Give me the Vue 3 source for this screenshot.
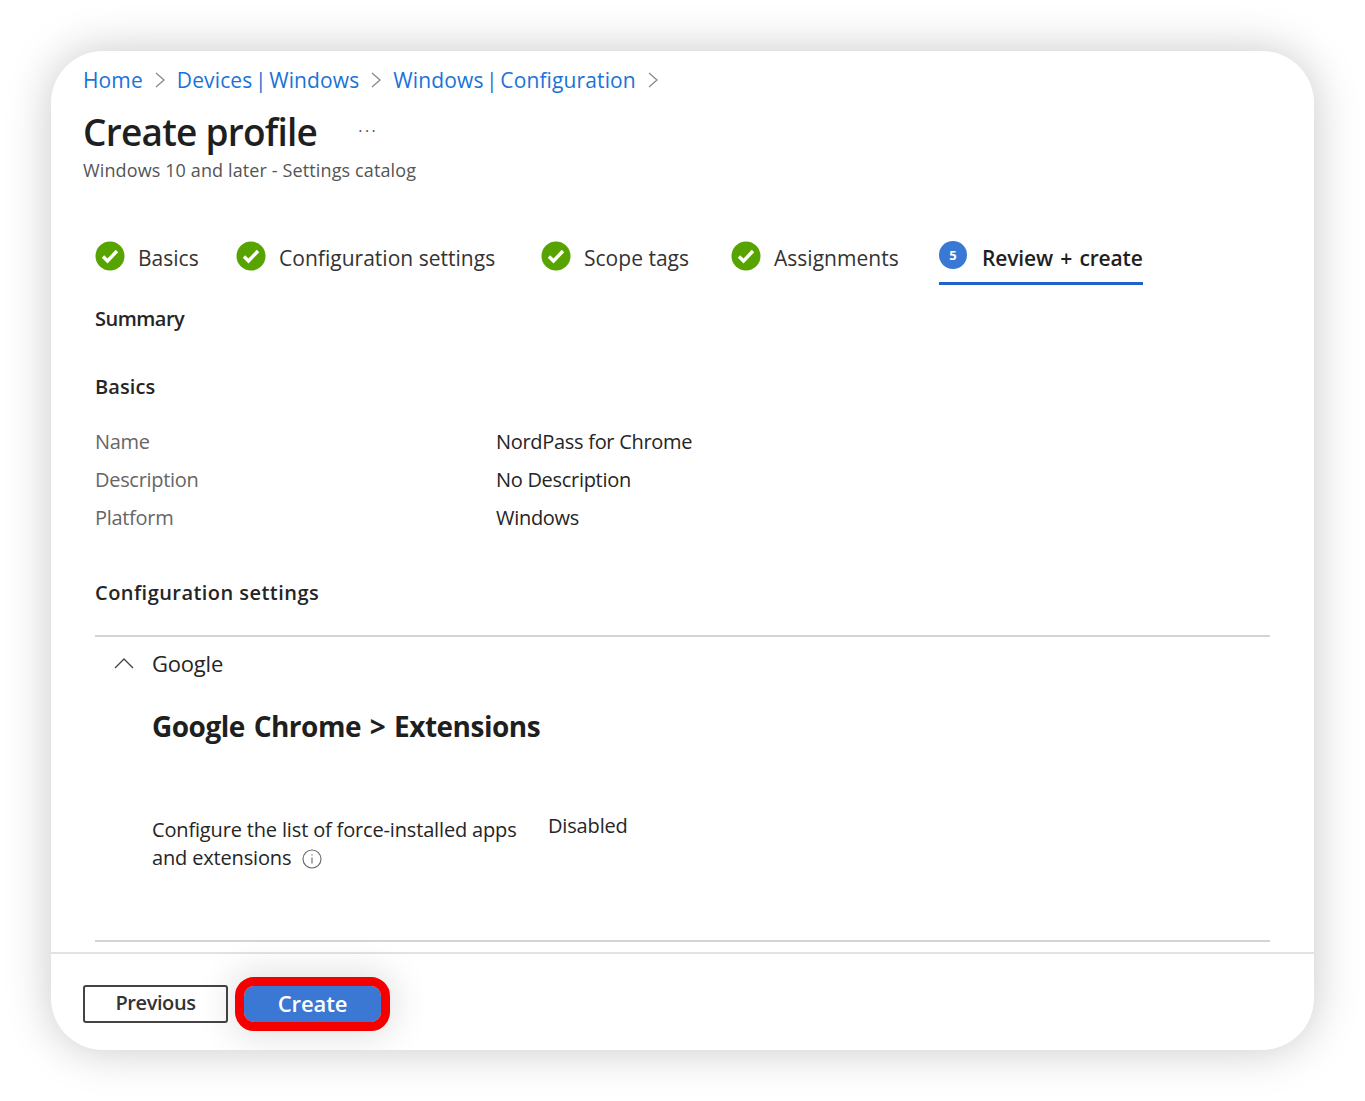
<script setup>
const crumbs = ['Home', 'Devices | Windows', 'Windows | Configuration']
const steps = ['Basics', 'Configuration settings', 'Scope tags', 'Assignments']
const basics = [
  { label: 'Name', value: 'NordPass for Chrome' },
  { label: 'Description', value: 'No Description' },
  { label: 'Platform', value: 'Windows' }
]
</script>

<template>
  <div class="page">
    <div class="card">
      <div class="content">
        <nav class="crumbs">
          <template v-for="c in crumbs" :key="c">
            <a class="crumb">{{ c }}</a>
            <svg class="chev" viewBox="0 0 12 18" fill="none" stroke="#8a8a8a" stroke-width="1.3">
              <path d="M2 2l8 7-8 7" />
            </svg>
          </template>
        </nav>
        <div class="title-row">
          <h1 class="title">Create profile</h1>
          <span class="more">···</span>
        </div>
        <p class="subtitle">Windows 10 and later - Settings catalog</p>

        <div class="body">
          <div class="tabs">
            <div v-for="s in steps" :key="s" class="tab">
              <svg class="tab-icon" viewBox="0 0 30 30">
                <circle cx="15" cy="15" r="14.5" fill="#57a300" />
                <path d="M8 15.5l4.5 4.5 9.5-10" fill="none" stroke="#fff" stroke-width="3.4" />
              </svg>
              <span>{{ s }}</span>
            </div>
            <div class="tab active">
              <span class="num">5</span>
              <span>Review + create</span>
            </div>
          </div>

          <h3 class="summary">Summary</h3>
          <h3 class="section">Basics</h3>
          <div v-for="b in basics" :key="b.label" class="row">
            <span class="row-label">{{ b.label }}</span>
            <span class="row-value">{{ b.value }}</span>
          </div>

          <h3 class="section config">Configuration settings</h3>
          <div class="accordion">
            <div class="acc-head">
              <svg class="acc-chev" viewBox="0 0 20 12" fill="none" stroke="#444" stroke-width="1.4">
                <path d="M1 11l9-9 9 9" />
              </svg>
              <span>Google</span>
            </div>
            <h2 class="acc-title">Google Chrome &gt; Extensions</h2>
            <div class="setting">
              <div class="setting-name">
                Configure the list of force-installed apps<br />
                and extensions
                <svg class="info" viewBox="0 0 20 20" fill="none" stroke="#666" stroke-width="1.1">
                  <circle cx="10" cy="10" r="9" />
                  <path d="M10 8.5v6M10 5.2v1.4" />
                </svg>
              </div>
              <div class="setting-value">Disabled</div>
            </div>
          </div>
        </div>
      </div>

      <footer class="footer">
        <button class="btn-prev">Previous</button>
        <button class="btn-create">Create</button>
      </footer>
    </div>
  </div>
</template>

<style>
html, body {
  margin: 0;
  background: #fff;
}
</style>

<style scoped>
.page {
  padding: 51px;
  height: 1101px;
  box-sizing: border-box;
  font-family: "Open Sans", "Noto Sans", sans-serif;
  color: #252525;
}

.card {
  height: 999px;
  background: #fff;
  border-radius: 52px;
  box-shadow: 0 0 46px rgba(0, 0, 0, 0.22);
  display: flex;
  flex-direction: column;
  overflow: hidden;
}

.content {
  flex: 1;
  padding: 14px 32px 0;
}

.crumbs {
  display: flex;
  align-items: center;
  height: 29px;
  font-size: 21px;
  letter-spacing: 0.12px;
  word-spacing: -3px;
}

.crumb {
  color: #1a73d8;
}

.chev {
  width: 12px;
  height: 18px;
  margin: 0 11px;
}

.title-row {
  display: flex;
  align-items: center;
  margin-top: 14px;
  height: 46px;
}

.title {
  margin: 0;
  font-size: 37px;
  font-weight: 600;
  letter-spacing: -0.75px;
  color: #1f1f1f;
}

.more {
  margin-left: 41px;
  font-size: 16px;
  letter-spacing: 2.5px;
  color: #555;
}

.subtitle {
  margin: 4px 0 0;
  font-size: 18px;
  letter-spacing: 0.12px;
  color: #555;
}

.body {
  padding: 0 12px;
}

.tabs {
  display: grid;
  grid-template-columns: 141px 305px 190px 208px auto;
  justify-content: start;
  margin-top: 49px;
  height: 74px;
  font-size: 21px;
  letter-spacing: 0.02px;
}

.tab {
  display: flex;
  align-items: flex-start;
  gap: 13px;
  line-height: 34px;
  padding-top: 10px;
  box-sizing: border-box;
  color: #333;
}

.tab-icon {
  width: 30px;
  height: 30px;
}

.tab.active {
  font-weight: 600;
  color: #1f1f1f;
  border-bottom: 3px solid #1f62c8;
  height: 54px;
  gap: 15px;
  letter-spacing: -0.15px;
  word-spacing: 2px;
}

.num {
  width: 28px;
  height: 28px;
  border-radius: 50%;
  background: #3a78d6;
  color: #fff;
  font-size: 13px;
  font-weight: 700;
  line-height: 28px;
  text-align: center;
  letter-spacing: 0;
}

.summary {
  margin: 0;
  font-size: 20px;
  font-weight: 600;
  letter-spacing: -0.5px;
  line-height: 28px;
}

.section {
  margin: 40px 0 26px;
  font-size: 20px;
  font-weight: 600;
  letter-spacing: 0.1px;
  line-height: 28px;
}

.row {
  display: flex;
  height: 38px;
  line-height: 30px;
  font-size: 20px;
  letter-spacing: -0.3px;
}

.row-label {
  width: 401px;
  color: #666;
}

.section.config {
  margin: 38px 0 28px;
  letter-spacing: 0.45px;
}

.accordion {
  border-top: 2px solid #d4d4d4;
  border-bottom: 2px solid #d4d4d4;
  height: 307px;
  box-sizing: border-box;
}

.acc-head {
  display: flex;
  align-items: center;
  height: 52px;
  padding-left: 19px;
  font-size: 22px;
  letter-spacing: -0.2px;
}

.acc-chev {
  width: 20px;
  height: 12px;
  margin-right: 18px;
}

.acc-title {
  margin: 18px 0 0 57px;
  font-size: 28px;
  font-weight: 700;
  letter-spacing: -0.5px;
  word-spacing: 2px;
  color: #1f1f1f;
}

.setting {
  display: flex;
  margin: 67px 0 0 57px;
  font-size: 20px;
  letter-spacing: -0.16px;
  line-height: 28px;
}

.setting-name {
  width: 396px;
  padding-top: 4px;
}

.info {
  width: 20px;
  height: 20px;
  margin-left: 6px;
  vertical-align: -4px;
}

.footer {
  display: flex;
  align-items: center;
  gap: 16px;
  height: 98px;
  box-sizing: border-box;
  padding: 4px 32px 0;
  border-top: 2px solid #e4e2e0;
}

.btn-prev {
  width: 145px;
  height: 38px;
  padding: 0 0 3px;
  background: #fff;
  border: 2px solid #444;
  border-radius: 3px;
  font: 600 20px "Open Sans", sans-serif;
  letter-spacing: -0.4px;
  color: #333;
}

.btn-create {
  width: 137px;
  height: 36px;
  padding: 0 0 2px;
  background: #3b78d4;
  border: none;
  border-radius: 10px;
  outline: 9px solid #f50000;
  outline-offset: 0;
  font: 600 22px "Open Sans", sans-serif;
  letter-spacing: -0.1px;
  color: #fff;
  box-shadow: 0 0 36px 14px rgba(0, 0, 0, 0.12);
}
</style>
